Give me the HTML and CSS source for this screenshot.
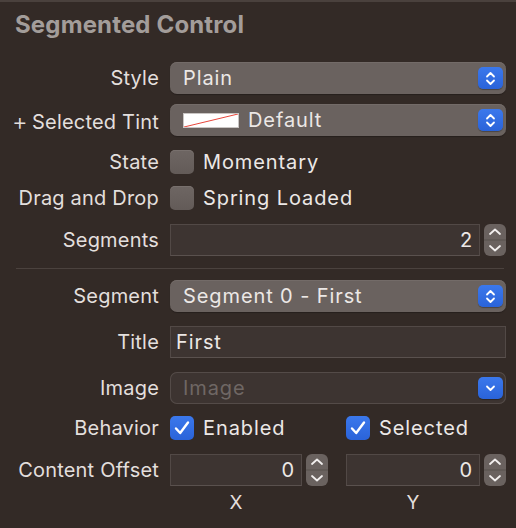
FILE: index.html
```html
<!DOCTYPE html>
<html>
<head>
<meta charset="utf-8">
<link rel="stylesheet" href="styles.css">
</head>
<body>
<div class="panel">
  <h1 class="title">Segmented Control</h1>

  <div class="row r-style">
    <div class="label">Style</div>
    <div class="popup">
      <span class="popup-text">Plain</span>
      <span class="blue-btn"><svg width="11" height="15" viewBox="0 0 11 15"><path d="M2 5.5 L5.5 2 L9 5.5 M2 9.5 L5.5 13 L9 9.5" fill="none" stroke="#fff" stroke-width="1.8" stroke-linecap="round" stroke-linejoin="round"/></svg></span>
    </div>
  </div>

  <div class="row r-tint">
    <div class="label"><span class="plus">+</span>Selected Tint</div>
    <div class="popup">
      <span class="swatch"><svg width="56" height="15" viewBox="0 0 56 15" preserveAspectRatio="none"><line x1="1" y1="14" x2="55" y2="1" stroke="#e8473c" stroke-width="1"/></svg></span>
      <span class="popup-text tint-text">Default</span>
      <span class="blue-btn"><svg width="11" height="15" viewBox="0 0 11 15"><path d="M2 5.5 L5.5 2 L9 5.5 M2 9.5 L5.5 13 L9 9.5" fill="none" stroke="#fff" stroke-width="1.8" stroke-linecap="round" stroke-linejoin="round"/></svg></span>
    </div>
  </div>

  <div class="row r-check r-state">
    <div class="label">State</div>
    <div class="check-item"><span class="checkbox"></span><span class="check-text">Momentary</span></div>
  </div>

  <div class="row r-check r-drag">
    <div class="label">Drag and Drop</div>
    <div class="check-item"><span class="checkbox"></span><span class="check-text">Spring Loaded</span></div>
  </div>

  <div class="row r-segments">
    <div class="label">Segments</div>
    <div class="stepper-group">
      <div class="field num">2</div>
      <div class="stepper">
        <svg width="22" height="32" viewBox="0 0 22 32"><path d="M6 10 L11 5.5 L16 10" fill="none" stroke="#f2efee" stroke-width="1.8" stroke-linecap="round" stroke-linejoin="round"/><line x1="0" y1="16" x2="22" y2="16" stroke="#57504c" stroke-width="1"/><path d="M6 22 L11 26.5 L16 22" fill="none" stroke="#f2efee" stroke-width="1.8" stroke-linecap="round" stroke-linejoin="round"/></svg>
      </div>
    </div>
  </div>

  <div class="separator"></div>

  <div class="row r-segment">
    <div class="label">Segment</div>
    <div class="popup">
      <span class="popup-text">Segment 0 - First</span>
      <span class="blue-btn"><svg width="11" height="15" viewBox="0 0 11 15"><path d="M2 5.5 L5.5 2 L9 5.5 M2 9.5 L5.5 13 L9 9.5" fill="none" stroke="#fff" stroke-width="1.8" stroke-linecap="round" stroke-linejoin="round"/></svg></span>
    </div>
  </div>

  <div class="row r-titlef">
    <div class="label">Title</div>
    <div class="field text-field">First</div>
  </div>

  <div class="row r-image">
    <div class="label">Image</div>
    <div class="popup disabled">
      <span class="popup-text placeholder">Image</span>
      <span class="blue-btn"><svg width="11" height="8" viewBox="0 0 11 8"><path d="M2 2.5 L5.5 6 L9 2.5" fill="none" stroke="#fff" stroke-width="1.8" stroke-linecap="round" stroke-linejoin="round"/></svg></span>
    </div>
  </div>

  <div class="row r-check r-behavior">
    <div class="label">Behavior</div>
    <div class="two-col">
      <div class="check-item"><span class="checkbox on"><svg width="24" height="24" viewBox="0 0 24 24"><path d="M6 12.5 L10.2 17 L18 6.5" fill="none" stroke="#fff" stroke-width="2.4" stroke-linecap="round" stroke-linejoin="round"/></svg></span><span class="check-text">Enabled</span></div>
      <div class="check-item"><span class="checkbox on"><svg width="24" height="24" viewBox="0 0 24 24"><path d="M6 12.5 L10.2 17 L18 6.5" fill="none" stroke="#fff" stroke-width="2.4" stroke-linecap="round" stroke-linejoin="round"/></svg></span><span class="check-text">Selected</span></div>
    </div>
  </div>

  <div class="row r-offset">
    <div class="label">Content Offset</div>
    <div class="two-col">
      <div class="stepper-group">
        <div class="field num">0</div>
        <div class="stepper">
          <svg width="22" height="32" viewBox="0 0 22 32"><path d="M6 10 L11 5.5 L16 10" fill="none" stroke="#f2efee" stroke-width="1.8" stroke-linecap="round" stroke-linejoin="round"/><line x1="0" y1="16" x2="22" y2="16" stroke="#57504c" stroke-width="1"/><path d="M6 22 L11 26.5 L16 22" fill="none" stroke="#f2efee" stroke-width="1.8" stroke-linecap="round" stroke-linejoin="round"/></svg>
        </div>
      </div>
      <div class="stepper-group">
        <div class="field num">0</div>
        <div class="stepper">
          <svg width="22" height="32" viewBox="0 0 22 32"><path d="M6 10 L11 5.5 L16 10" fill="none" stroke="#f2efee" stroke-width="1.8" stroke-linecap="round" stroke-linejoin="round"/><line x1="0" y1="16" x2="22" y2="16" stroke="#57504c" stroke-width="1"/><path d="M6 22 L11 26.5 L16 22" fill="none" stroke="#f2efee" stroke-width="1.8" stroke-linecap="round" stroke-linejoin="round"/></svg>
        </div>
      </div>
    </div>
  </div>

  <div class="row r-axis">
    <div class="label"></div>
    <div class="two-col">
      <div class="axis">X</div>
      <div class="axis">Y</div>
    </div>
  </div>
</div>
</body>
</html>
```

FILE: styles.css
```css
* { box-sizing: border-box; }
html, body {
  margin: 0;
  padding: 0;
  background: #332a26;
}
body {
  width: 516px;
  height: 528px;
  overflow: hidden;
  font-family: Inter, "Noto Sans", sans-serif;
  color: #e6e2e0;
  font-size: 20px;
}
.panel {
  border-top: 2px solid #4a413d;
  height: 528px;
  padding-right: 10px;
}
.title {
  margin: 0;
  padding: 9px 0 0 15px;
  height: 38px;
  font-size: 24px;
  font-weight: 700;
  line-height: 28px;
  color: #a39d9a;
  letter-spacing: 0.15px;
}
.row {
  display: grid;
  grid-template-columns: 159px 1fr;
  column-gap: 11px;
  align-items: center;
  height: 32px;
}
.r-style { margin-top: 22px; }
.r-tint { margin-top: 10px; }
.r-state { margin-top: 10px; }
.r-drag { margin-top: 4px; }
.r-segments { margin-top: 10px; }
.r-segment { margin-top: 11px; }
.r-titlef { margin-top: 14px; }
.r-image { margin-top: 14px; }
.r-behavior { margin-top: 8px; }
.r-offset { margin-top: 10px; }
.r-axis { margin-top: 5px; height: 22px; }

.separator {
  height: 1px;
  background: #4b423e;
  margin: 12px 2px 0 16px;
}

.label {
  text-align: right;
  white-space: nowrap;
  color: #e3dfdd;
  letter-spacing: 0.2px;
}
.plus {
  font-weight: 300;
  font-size: 24px;
  margin-right: 4px;
  position: relative;
  top: 1px;
}
.popup {
  height: 32px;
  border-radius: 7px;
  background: #6a625f;
  box-shadow: inset 0 1px 0 #736b68, 0 1px 1px rgba(0,0,0,0.25);
  display: flex;
  align-items: center;
  padding-left: 13px;
  padding-right: 3px;
}
.popup-text {
  flex: 1;
  color: #ece8e6;
  white-space: nowrap;
  letter-spacing: 0.9px;
}
.tint-text { padding-left: 9px; }
.swatch {
  width: 56px;
  height: 15px;
  background: #fff;
  border: 1px solid #c9c5c3;
  display: block;
  line-height: 0;
  overflow: hidden;
}
.swatch svg { display: block; margin: -1px; }
.blue-btn {
  width: 25px;
  height: 22px;
  border-radius: 5px;
  background: linear-gradient(#3b78ec, #2a63d9);
  box-shadow: 0 1px 1px rgba(0,0,0,0.3);
  display: flex;
  align-items: center;
  justify-content: center;
}
.popup.disabled {
  background: #3d3431;
  box-shadow: inset 0 0 0 1px #544b48;
}
.placeholder { color: #6f6764; }

.check-item {
  display: flex;
  align-items: center;
}
.checkbox {
  width: 24px;
  height: 24px;
  border-radius: 5px;
  background: linear-gradient(#6e6663, #635b58);
  box-shadow: inset 0 1px 0 #78706d;
  margin-right: 9px;
  flex: none;
  display: block;
}
.checkbox svg { display: block; }
.checkbox.on {
  background: linear-gradient(#3b78ec, #2a63d9);
  box-shadow: none;
}
.check-text { color: #ece8e6; white-space: nowrap; letter-spacing: 0.9px; }

.stepper-group {
  display: flex;
  align-items: center;
  gap: 4px;
}
.field {
  height: 32px;
  background: #3d3431;
  border: 1px solid #524946;
  border-bottom-color: #5a514e;
  display: flex;
  align-items: center;
  color: #ece8e6;
  letter-spacing: 0.9px;
}
.num {
  flex: 1;
  justify-content: flex-end;
  padding-right: 6px;
}
.text-field {
  padding-left: 5px;
}
.stepper {
  width: 22px;
  height: 32px;
  border-radius: 6px;
  background: #6a625f;
  flex: none;
  overflow: hidden;
}
.stepper svg { display: block; }

.two-col {
  display: grid;
  grid-template-columns: 158px 160px;
  column-gap: 18px;
}
.r-offset .stepper-group:first-child .field { width: 132px; flex: none; }
.axis {
  text-align: center;
  padding-right: 26px;
  font-size: 19px;
  color: #e3dfdd;
}
```
